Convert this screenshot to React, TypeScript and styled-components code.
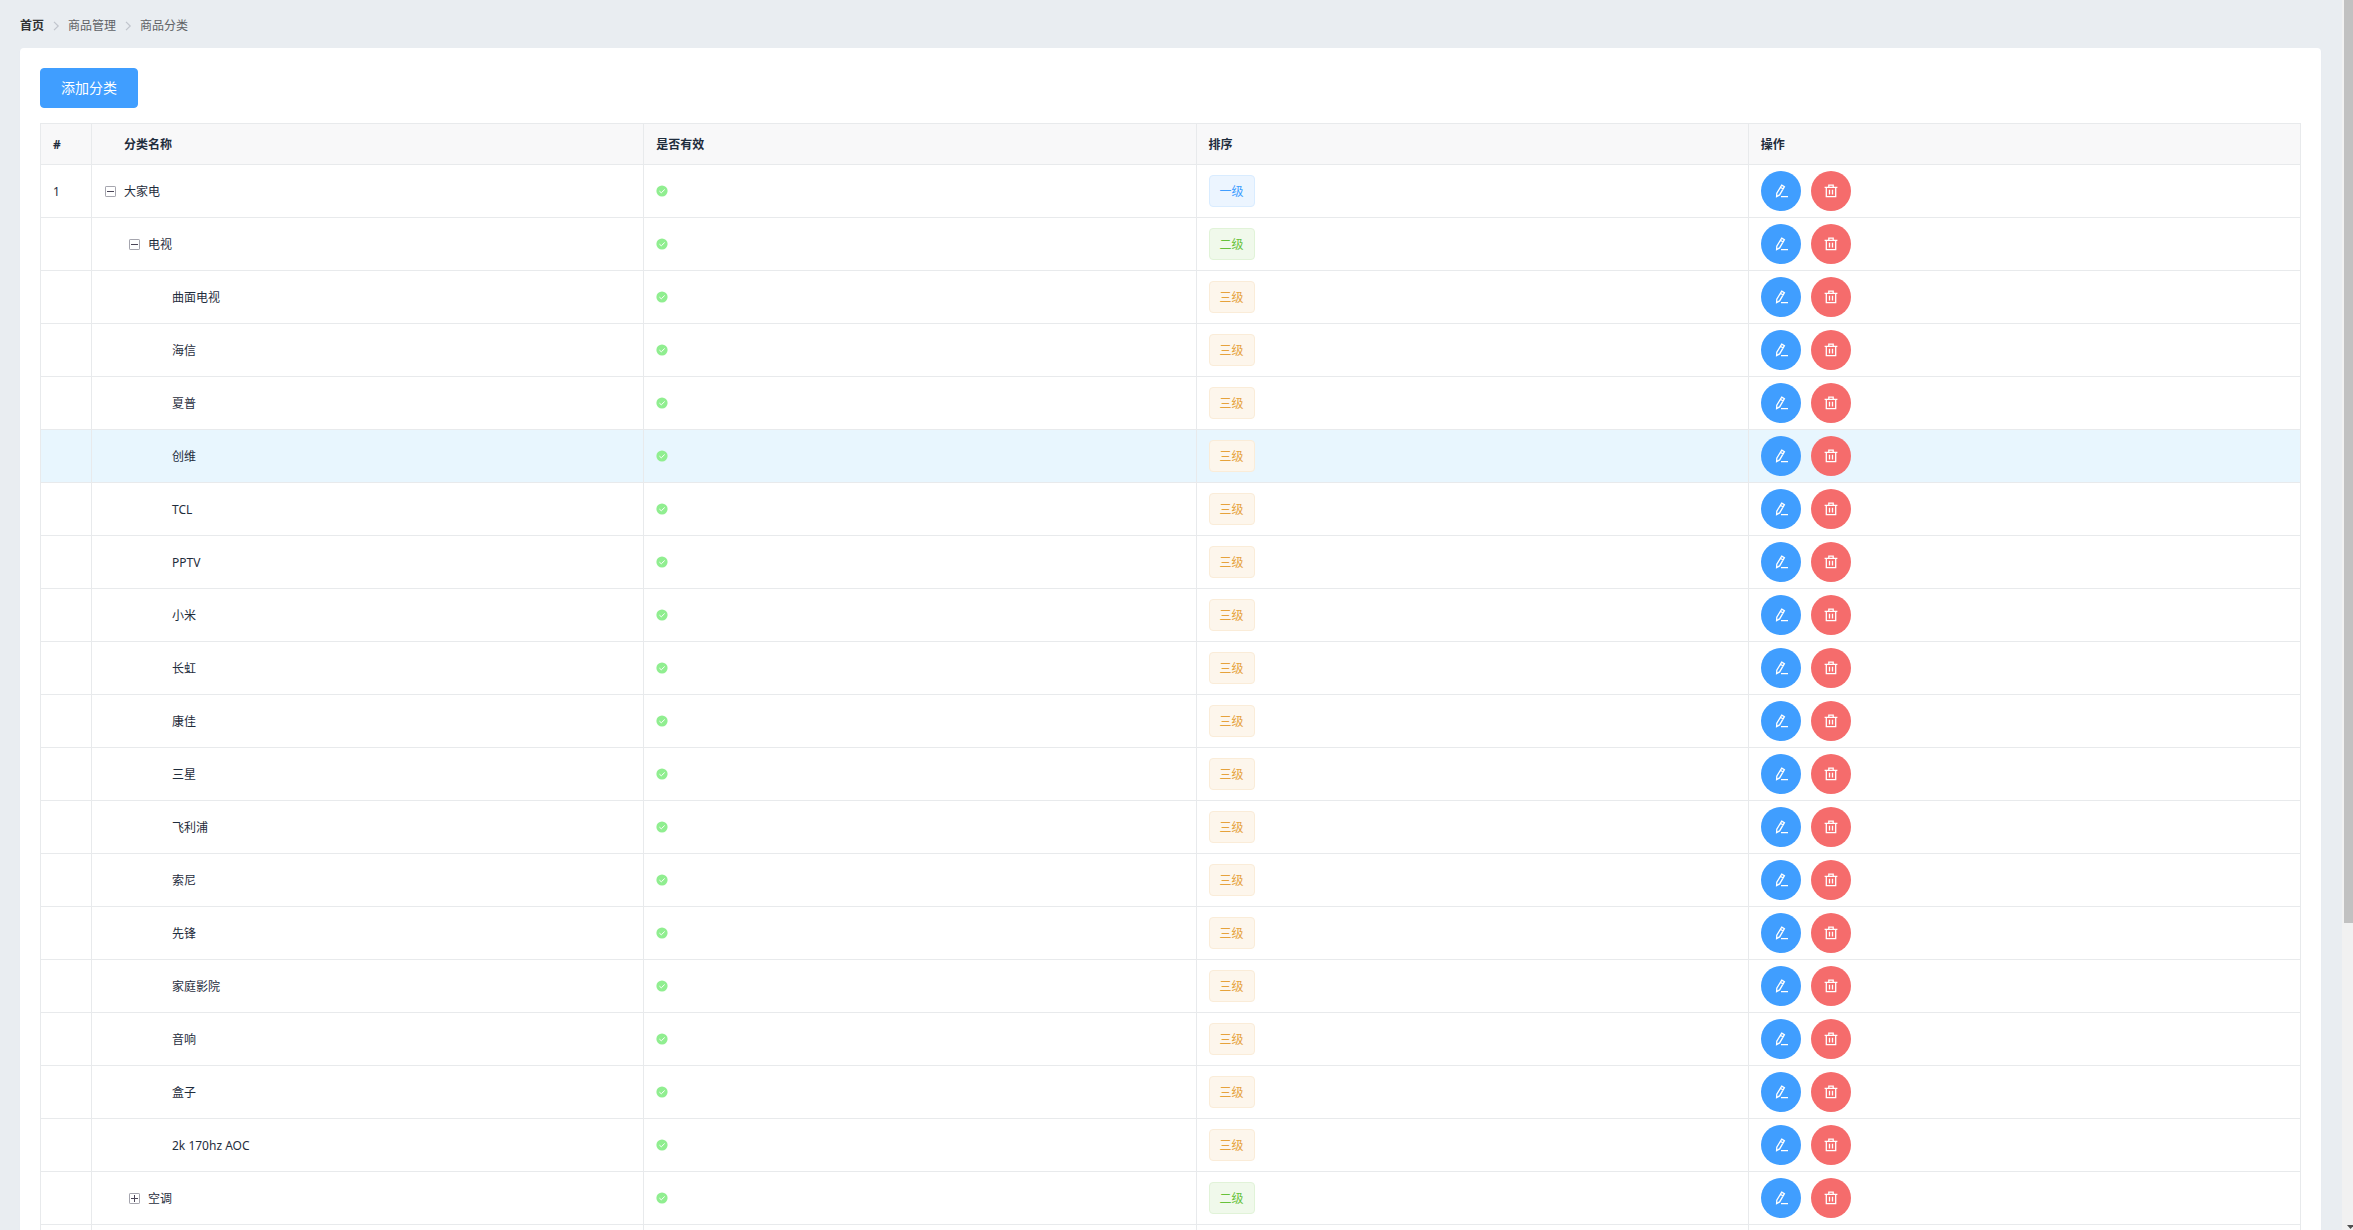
import React, { useState } from "react";
import styled, { createGlobalStyle } from "styled-components";

const GlobalStyle = createGlobalStyle`
  * { box-sizing: border-box; }
  html, body, #root { height: 100%; }
  body {
    margin: 0;
    overflow: hidden;
    background: #e9edf1;
    color: #2c3e50;
    font: 12px/18px "Noto Sans", "Noto Sans CJK SC", sans-serif;
  }
  button { font-family: inherit; }
`;

const Shell = styled.div`
  display: flex;
  height: 100vh;
  overflow: hidden;
`;

const Main = styled.main`
  flex: 1;
  min-width: 0;
  overflow: hidden;
  padding: 0 21px 0 20px;
`;

const Crumbs = styled.nav`
  display: flex;
  align-items: center;
  height: 48px;
  gap: 6px;
  padding-top: 4px;
`;

const Crumb = styled.a<{ $home?: boolean }>`
  color: ${(p) => (p.$home ? "#303133" : "#606266")};
  font-weight: ${(p) => (p.$home ? 700 : 400)};
  text-decoration: none;
`;

const Card = styled.section`
  padding: 20px;
  border-radius: 4px;
  background: #fff;
  box-shadow: 0 1px 1px rgba(200, 200, 255, 0.3);
`;

const AddButton = styled.button`
  display: block;
  height: 40px;
  margin-bottom: 15px;
  padding: 0 20px;
  border: 1px solid #409eff;
  border-radius: 4px;
  background: #409eff;
  color: #fff;
  font-size: 14px;
  line-height: 20px;
`;

const Table = styled.table`
  width: 100%;
  table-layout: fixed;
  border: 1px solid #e8eaec;
  border-width: 1px 0 0 1px;
  border-collapse: separate;
  border-spacing: 0;
  text-align: left;
`;

const HeadCell = styled.th<{ $indent?: boolean; $narrow?: boolean }>`
  width: ${(p) => (p.$narrow ? "51px" : "auto")};
  height: 41px;
  padding: 2px 12px 0 ${(p) => (p.$indent ? 32 : 12)}px;
  border: 1px solid #e8eaec;
  border-width: 0 1px 1px 0;
  background: #f8f8f9;
  color: #1f2d3d;
  font-weight: 700;
`;

const Row = styled.tr<{ $active?: boolean }>`
  background: ${(p) => (p.$active ? "#e8f6fe" : "#fff")};
`;

const Cell = styled.td`
  height: 53px;
  padding: 0 12px;
  border: 1px solid #e8eaec;
  border-width: 0 1px 1px 0;
  color: #1f2d3d;
`;

const NameBox = styled.div<{ $level: number }>`
  display: flex;
  align-items: center;
  gap: 8px;
  padding-left: ${(p) => (p.$level === 3 ? 68 : (p.$level - 1) * 24 + 1)}px;
`;

const Label = styled.span`
  display: block;
  padding-top: 2px;
`;

const Toggle = styled.button`
  display: flex;
  width: 11px;
  height: 11px;
  padding: 0;
  border: 0;
  background: none;
`;

const Tag = styled.span<{ $level: number }>`
  display: inline-block;
  height: 32px;
  padding: 0 10px;
  border: 1px solid ${(p) => ["#d9ecff", "#e1f3d8", "#faecd8"][p.$level - 1]};
  border-radius: 4px;
  background: ${(p) => ["#ecf5ff", "#f0f9eb", "#fdf6ec"][p.$level - 1]};
  color: ${(p) => ["#409eff", "#67c23a", "#e6a23c"][p.$level - 1]};
  line-height: 32px;
  vertical-align: middle;
`;

const Actions = styled.div`
  display: flex;
  gap: 10px;
`;

const RoundButton = styled.button<{ $danger?: boolean }>`
  display: flex;
  align-items: center;
  justify-content: center;
  width: 40px;
  height: 40px;
  padding: 0;
  border: 0;
  border-radius: 50%;
  background: ${(p) => (p.$danger ? "#f56c6c" : "#409eff")};
  color: #fff;
`;

const ScrollTrack = styled.div`
  display: flex;
  flex-direction: column;
  justify-content: space-between;
  width: 11px;
  overflow: hidden;
  padding-left: 2px;
  background: #f1f1f1;
`;

const ScrollThumb = styled.div`
  height: 75%;
  background: #c1c1c1;
`;

const Block = styled.svg`
  display: block;
  flex: none;
`;

const Chevron = () => (
  <Block width="12" height="12" viewBox="0 0 12 12" fill="none" stroke="#c0c4cc" strokeWidth="1.2">
    <path d="M4 1.8 8.2 6 4 10.2" />
  </Block>
);

const Check = () => (
  <Block width="12" height="12" viewBox="0 0 12 12" role="img" aria-label="有效">
    <circle cx="6" cy="6" r="5.6" fill="#90ee90" />
    <path d="M3.4 6.1 5.3 7.8 8.7 4.5" fill="none" stroke="#fff" strokeWidth="1" />
  </Block>
);

const Pen = () => (
  <Block width="14" height="14" viewBox="0 0 14 14" fill="none" stroke="currentColor" strokeWidth="1.3">
    <path d="M7.7 1.1 10.4 2.7 5.6 10.9 2.6 12.6 2.8 9.2ZM6.4 3.3 9.2 5M7 12.6H14" />
  </Block>
);

const Trash = () => (
  <Block width="14" height="14" viewBox="0 0 14 14" fill="none" stroke="currentColor" strokeWidth="1.3">
    <path d="M.6 3.4H13.4M4.8 3.2V1.2H9.2V3.2M2.3 3.4V12.6H11.7V3.4M5.5 5.8V10.4M8.5 5.8V10.4" />
  </Block>
);

const Expander = ({ open }: { open: boolean }) => (
  <Block width="11" height="11" viewBox="0 0 11 11" fill="none">
    <rect x=".5" y=".5" width="10" height="10" rx=".6" stroke="#a5a5ae" />
    <path d={open ? "M2 5.5H9" : "M2 5.5H9M5.5 2V9"} stroke="#4b4658" />
  </Block>
);

type Item = { name: string; level: number; no?: number; open?: boolean };

const leaves = [
  "曲面电视", "海信", "夏普", "创维", "TCL", "PPTV", "小米", "长虹", "康佳",
  "三星", "飞利浦", "索尼", "先锋", "家庭影院", "音响", "盒子", "2k 170hz AOC",
];

const items: Item[] = [
  { name: "大家电", level: 1, no: 1, open: true },
  { name: "电视", level: 2, open: true },
  ...leaves.map((name) => ({ name, level: 3 })),
  { name: "空调", level: 2, open: false },
  { name: "", level: 3 },
];

const levelNames = ["一级", "二级", "三级"];

export default function App() {
  const [active, setActive] = useState("创维");
  return (
    <Shell>
      <GlobalStyle />
      <Main>
        <Crumbs aria-label="面包屑">
          <Crumb href="#home" $home>首页</Crumb>
          <Chevron />
          <Crumb href="#goods">商品管理</Crumb>
          <Chevron />
          <Crumb href="#categories">商品分类</Crumb>
        </Crumbs>
        <Card>
          <AddButton type="button">添加分类</AddButton>
          <Table>
            <thead>
              <tr>
                <HeadCell $narrow>#</HeadCell>
                <HeadCell $indent>分类名称</HeadCell>
                <HeadCell>是否有效</HeadCell>
                <HeadCell>排序</HeadCell>
                <HeadCell>操作</HeadCell>
              </tr>
            </thead>
            <tbody>
              {items.map((item, i) => (
                <Row key={i} $active={item.name === active} onMouseEnter={() => setActive(item.name)}>
                  <Cell><Label>{item.no}</Label></Cell>
                  <Cell>
                    <NameBox $level={item.level}>
                      {item.open !== undefined && (
                        <Toggle type="button" aria-label={item.open ? "收起" : "展开"}>
                          <Expander open={item.open} />
                        </Toggle>
                      )}
                      <Label>{item.name}</Label>
                    </NameBox>
                  </Cell>
                  <Cell>{item.name && <Check />}</Cell>
                  <Cell>{item.name && <Tag $level={item.level}>{levelNames[item.level - 1]}</Tag>}</Cell>
                  <Cell>
                    {item.name && (
                      <Actions>
                        <RoundButton type="button" aria-label="编辑"><Pen /></RoundButton>
                        <RoundButton type="button" $danger aria-label="删除"><Trash /></RoundButton>
                      </Actions>
                    )}
                  </Cell>
                </Row>
              ))}
            </tbody>
          </Table>
        </Card>
      </Main>
      <ScrollTrack aria-hidden="true">
        <ScrollThumb />
        <Block width="9" height="6" viewBox="0 0 9 6" fill="#505050">
          <path d="M3 1H10L6.5 5Z" />
        </Block>
      </ScrollTrack>
    </Shell>
  );
}
